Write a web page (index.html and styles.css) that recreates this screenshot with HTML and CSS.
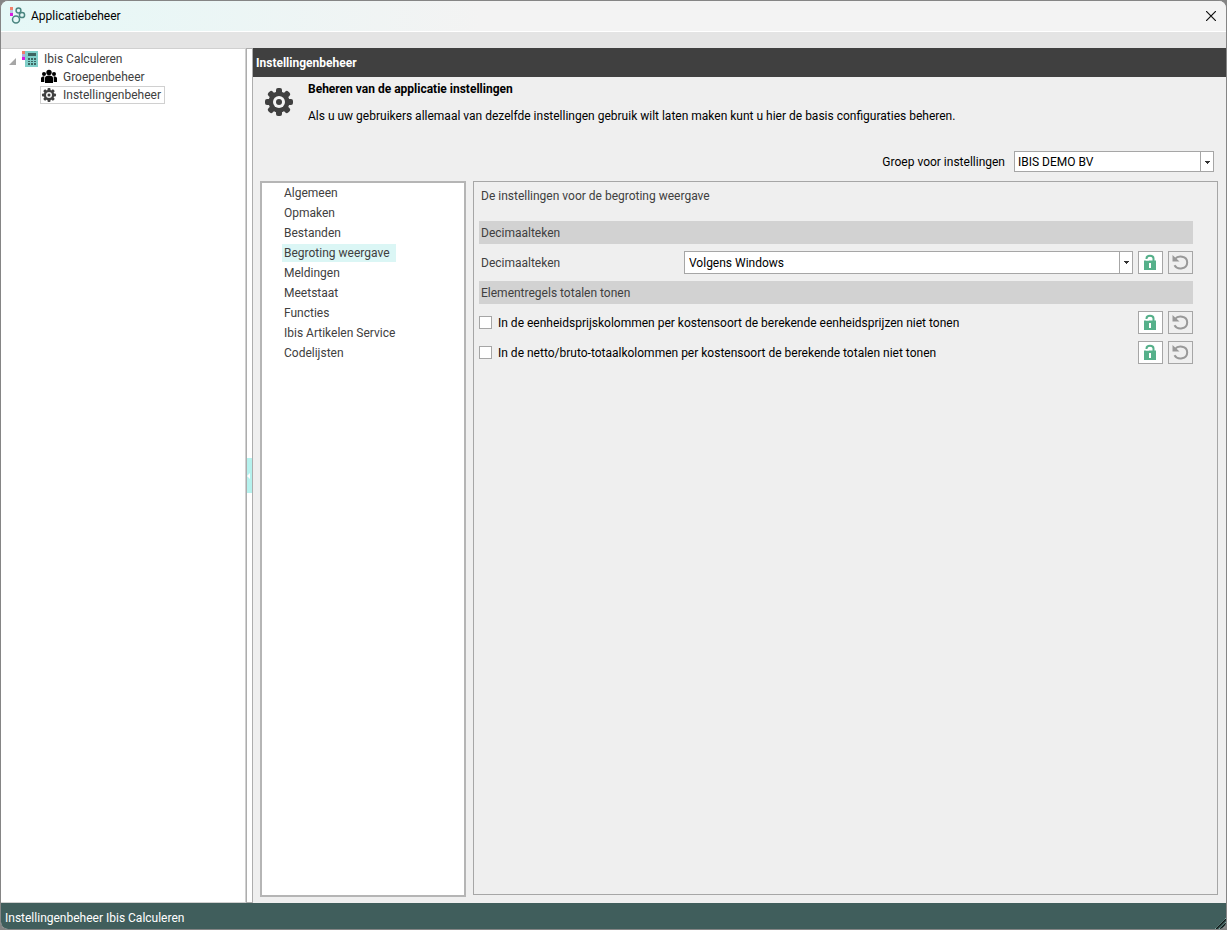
FILE: index.html
```html
<!DOCTYPE html>
<html lang="nl">
<head>
<meta charset="utf-8">
<title>Applicatiebeheer</title>
<link rel="stylesheet" href="styles.css">
</head>
<body>
<svg class="defs" aria-hidden="true">
  <symbol id="gear" viewBox="0 0 32 32">
    <g fill="#404040">
      <g id="teeth">
        <rect x="13" y="2" width="6" height="28" rx="2"/>
        <rect x="2" y="13" width="28" height="6" rx="2"/>
      </g>
      <use href="#teeth" transform="rotate(45 16 16)"/>
      <circle cx="16" cy="16" r="10.500"/>
    </g>
    <circle cx="16" cy="16" r="6" fill="#f4f4f4"/>
    <circle cx="16" cy="16" r="3" fill="#404040"/>
  </symbol>
  <symbol id="lock" viewBox="0 0 15 17">
    <path d="M3.500 5V4.500C3.500 0.800 10.500 0.800 10.500 4.500V8" fill="none" stroke="#55b08a" stroke-width="2"/>
    <path d="M1 6.500h12V16H1z" fill="#55b08a"/>
    <path d="M3 5h3v1.500H3z" fill="#fff"/>
    <path d="M6 9h2v5H6z" fill="#fff"/>
  </symbol>
  <symbol id="undo" viewBox="0 0 17 17">
    <path d="M3 5C6 1.200 15 1.800 15.200 8.200c0 7-9.500 8.300-12.700 3" fill="none" stroke="#999" stroke-width="2"/>
    <path d="M0.500 1v6.500H7.500z" fill="#999"/>
  </symbol>
</svg>
<div class="window">
  <header class="titlebar">
    <svg class="logo" viewBox="0 0 18 18" aria-hidden="true">
      <path d="M2 0h3v3H2z" fill="#f0806c"/><path d="M2 3h3v3H2z" fill="#b8c8e0"/><path d="M2 6h3v3H2z" fill="#d81be0"/>
      <g fill="none" stroke="#4a8580" stroke-width="1.500"><circle cx="10.500" cy="3.500" r="2.400"/><circle cx="14" cy="8" r="2.600"/><circle cx="8" cy="12.500" r="3.500"/></g>
    </svg>
    <h1 class="title">Applicatiebeheer</h1>
    <button class="close" type="button" aria-label="Sluiten"><svg viewBox="0 0 10 10"><path d="M0 0l10 10M10 0L0 10" stroke="#111" stroke-width="1.200"/></svg></button>
  </header>
  <div class="toolbar"></div>
  <main class="main">
    <nav class="tree" aria-label="Onderdelen">
      <a class="node root" href="#calculeren">
        <svg class="arrow" viewBox="0 0 8 8"><path d="M8 0v8H0z" fill="#a6a6a6"/></svg>
        <svg class="icon" viewBox="0 0 16 16"><path d="M3 0h13v16H3z" fill="#80cfc9"/><path d="M0 0h3v3H0z" fill="#f0806c"/><path d="M0 3h3v3H0z" fill="#b8a8e0"/><path d="M0 6h3v3H0z" fill="#d81be0"/><path d="M6 2h8v3H6zM6 7h2v2H6zM9 7h2v2H9zM12 7h2v2h-2zM6 10h2v1H6zM9 10h2v1H9zM12 10h2v1h-2zM6 12h2v2H6zM9 12h2v2H9zM12 12h2v2h-2z" fill="#3c6561"/></svg>
        <span>Ibis Calculeren</span></a>
      <a class="node child" href="#groepen">
        <svg class="icon" viewBox="0 0 16 16"><circle cx="8" cy="3.500" r="2.700"/><circle cx="3" cy="5" r="2"/><circle cx="13" cy="5" r="2"/><path d="M4 14V9q0-2.500 4-2.500T12 9v5zM0 13V9.500Q0 7.500 3.300 7.300V13zM12.700 13V7.300Q16 7.500 16 9.500V13z"/></svg>
        <span>Groepenbeheer</span></a>
      <a class="node child selected" href="#instellingen" aria-current="page">
        <svg class="icon"><use href="#gear"/></svg>
        <span>Instellingenbeheer</span></a>
    </nav>
    <button class="splitter" type="button" aria-label="Paneel inklappen"><span class="grip"></span></button>
    <section class="content">
      <h2 class="heading">Instellingenbeheer</h2>
      <div class="intro">
        <svg class="intro-icon"><use href="#gear"/></svg>
        <div>
          <h3 class="intro-title">Beheren van de applicatie instellingen</h3>
          <p class="intro-text">Als u uw gebruikers allemaal van dezelfde instellingen gebruik wilt laten maken kunt u hier de basis configuraties beheren.</p>
        </div>
      </div>
      <div class="group">
        <label for="groep">Groep voor instellingen</label>
        <div class="combo group-combo"><select id="groep"><option>IBIS DEMO BV</option></select></div>
      </div>
      <div class="columns">
        <nav class="list" aria-label="Instellingen">
          <a href="#algemeen">Algemeen</a>
          <a href="#opmaken">Opmaken</a>
          <a href="#bestanden">Bestanden</a>
          <a class="active" href="#begroting" aria-current="page">Begroting weergave</a>
          <a href="#meldingen">Meldingen</a>
          <a href="#meetstaat">Meetstaat</a>
          <a href="#functies">Functies</a>
          <a href="#service">Ibis Artikelen Service</a>
          <a href="#codelijsten">Codelijsten</a>
        </nav>
        <form class="panel">
          <p class="panel-title">De instellingen voor de begroting weergave</p>
          <h4 class="band">Decimaalteken</h4>
          <div class="row">
            <label class="name" for="decimaal">Decimaalteken</label>
            <div class="combo"><select id="decimaal"><option>Volgens Windows</option></select></div>
            <button class="tool lock" type="button" aria-label="Vergrendelen"><svg><use href="#lock"/></svg></button>
            <button class="tool undo" type="button" aria-label="Herstellen"><svg><use href="#undo"/></svg></button>
          </div>
          <h4 class="band">Elementregels totalen tonen</h4>
          <div class="row">
            <label class="check"><input type="checkbox">In de eenheidsprijskolommen per kostensoort de berekende eenheidsprijzen niet tonen</label>
            <button class="tool lock" type="button" aria-label="Vergrendelen"><svg><use href="#lock"/></svg></button>
            <button class="tool undo" type="button" aria-label="Herstellen"><svg><use href="#undo"/></svg></button>
          </div>
          <div class="row">
            <label class="check"><input type="checkbox">In de netto/bruto-totaalkolommen per kostensoort de berekende totalen niet tonen</label>
            <button class="tool lock" type="button" aria-label="Vergrendelen"><svg><use href="#lock"/></svg></button>
            <button class="tool undo" type="button" aria-label="Herstellen"><svg><use href="#undo"/></svg></button>
          </div>
        </form>
      </div>
    </section>
  </main>
  <footer class="status"><span>Instellingenbeheer Ibis Calculeren</span>
    <svg class="resize" viewBox="0 0 12 12" aria-hidden="true"><path d="M1 12L12 1M5 12l7-7M9 12l3-3" stroke="#a9dcd5"/><path d="M2 12L12 2M6 12l6-6M10 12l2-2" stroke="#101818" stroke-width="1.500"/></svg>
  </footer>
</div>
</body>
</html>
```

FILE: styles.css
```css
* { box-sizing: border-box; }
body { margin: 0; background: #858585; color: #000; font: 12px/16px Roboto, "Open Sans", sans-serif; }
h1, h2, h3, h4, p { margin: 0; font-size: inherit; font-weight: normal; }
a { color: inherit; text-decoration: none; }
button { padding: 0; border: 0; font: inherit; }
svg { display: block; flex: none; }
.defs { position: absolute; width: 0; height: 0; }
.window { display: flex; flex-direction: column; height: 100vh; border: 1px solid #858585; border-radius: 8px; overflow: hidden; background: #efefef; }
.titlebar { display: flex; align-items: center; flex: none; height: 31px; padding: 0 10px 0 7px; gap: 5px; border-bottom: 1px solid #fff; background: linear-gradient(90deg, #e5f8f7, #f3f3f3 480px); }
.logo { width: 18px; height: 18px; }
.title { flex: 1; }
.close { background: none; }
.close svg { width: 10px; height: 10px; }
.toolbar { flex: none; height: 16px; background: #e4e4e4; }
.main { display: flex; flex: 1; min-height: 0; }
.tree { flex: none; width: 245px; padding-top: 1px; border: 1px solid #d0d0d0; border-width: 1px 1px 1px 0; background: #fff; color: #404040; }
.node { display: flex; align-items: center; width: max-content; height: 18px; gap: 6px; }
.root { padding-left: 8px; }
.child { margin-left: 39px; padding: 0 4px 0 1px; }
.selected { outline: 1px solid #d0d0d0; outline-offset: -1px; }
.icon { width: 16px; height: 16px; }
.arrow { width: 7px; height: 7px; margin-top: 5px; }
.splitter { display: flex; align-items: center; flex: none; width: 7px; border: 1px solid #adadad; background: #fff; }
.grip { display: flex; align-items: center; width: 5px; height: 35px; background: #b6f2ee; }
.grip::before { content: ""; border: 3px solid transparent; border-left: 0; border-right-color: #fff; }
.content { display: flex; flex-direction: column; flex: 1; min-width: 0; }
.heading { height: 29px; padding: 7px 3px; background: #404040; color: #fff; font-weight: 700; }
.intro { display: flex; gap: 13px; padding: 4px 10px 0; }
.intro-icon { width: 32px; height: 32px; margin-top: 5px; }
.intro-title { font-weight: 700; }
.intro-text { margin-top: 11px; }
.group { display: flex; align-items: center; justify-content: flex-end; gap: 9px; padding: 27px 12px 9px; }
.combo { position: relative; display: flex; flex: 1; border: 1px solid #a6a6a6; background: #fff; }
.combo select { flex: 1; height: 21px; padding: 0 16px 0 4px; border: 0; appearance: none; background: none; color: #000; font: inherit; }
.combo::after { content: ""; position: absolute; inset: 0 0 0 auto; width: 13px; border-left: 1px solid #a6a6a6; pointer-events: none; background: linear-gradient(#333, #333) 50% 9px / 5px 1px no-repeat, linear-gradient(#333, #333) 50% 10px / 3px 1px no-repeat, linear-gradient(#333, #333) 50% 11px / 1px 1px no-repeat; }
.combo::after { width: 12px; }
.group-combo { flex: none; width: 200px; }
.group-combo select { height: 19px; padding-left: 3px; }
.columns { display: flex; flex: 1; gap: 7px; min-height: 0; padding: 0 8px 6px 7px; }
.list { display: flex; flex-direction: column; flex: none; align-items: flex-start; gap: 2px; width: 206px; padding: 1px 20px; border: 2px solid #b5b5b5; background: #fff; color: #404040; }
.list a { padding: 1px 6px 1px 2px; }
.active { background: #dbf6f5; }
.panel { flex: 1; min-width: 0; margin-bottom: 2px; padding: 6px 24px 0 5px; border: 1px solid #a6a6a6; color: #404040; }
.panel-title { padding: 0 2px; margin-bottom: 17px; }
.band { padding: 4px 2px 3px; background: #d2d2d2; }
.row { display: flex; align-items: center; gap: 5px; height: 37px; color: #000; }
.row + .row { margin-top: -7px; }
.name { width: 200px; padding-left: 2px; color: #404040; }
.tool { display: grid; place-items: center; flex: none; width: 25px; height: 23px; border: 1px solid #a6a6a6; background: #efefef; }
.lock { background: #fff; }
.lock svg { width: 15px; height: 17px; }
.undo svg { width: 17px; height: 17px; }
.check { display: flex; flex: 1; align-items: center; gap: 6px; }
.check input { width: 13px; height: 13px; margin: 0; border: 1px solid #a6a6a6; appearance: none; background: #fff; }
.check input:checked { background: #55b08a; }
.status { display: flex; align-items: flex-end; justify-content: space-between; flex: none; height: 26px; padding-left: 4px; background: #405e5c; color: #fff; }
.status span { padding-bottom: 3px; }
.resize { width: 12px; height: 12px; }
```
